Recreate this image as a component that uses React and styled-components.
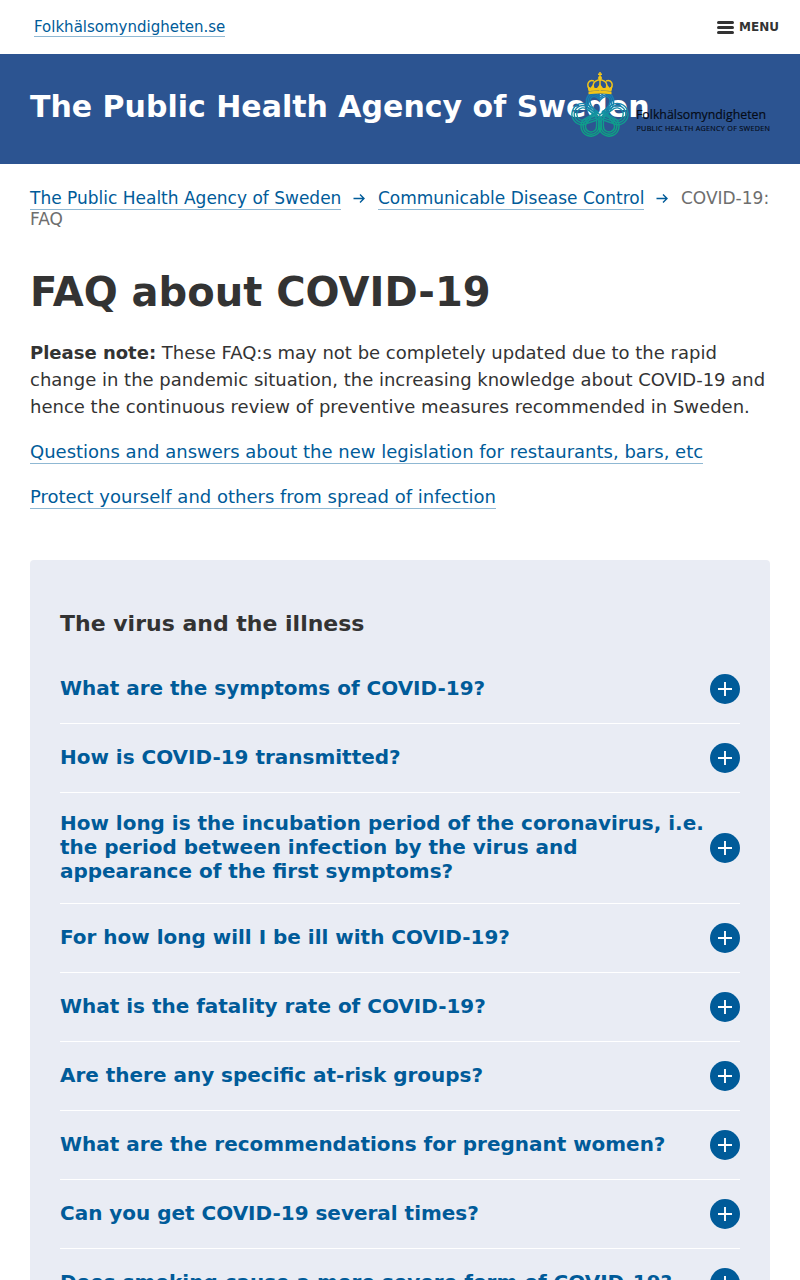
import React from "react";
import styled, { createGlobalStyle } from "styled-components";

const Global = createGlobalStyle`
  *, *::before, *::after { box-sizing: border-box; }
  html, body { margin: 0; height: 100%; overflow: hidden; }
  body {
    background: #fff;
    color: #333;
    font-family: "DejaVu Sans", Verdana, sans-serif;
    font-size: 18px;
    line-height: 27px;
  }
`;

const Page = styled.div`
  height: 1280px;
  overflow: hidden;
`;

const Link = styled.a`
  color: #005b99;
  text-decoration: none;
  padding-bottom: ${(p) => (p.$tight ? "0" : "1px")};
  border-bottom: 1px solid #8fb8d3;
`;

const TopBar = styled.header`
  height: 54px;
  padding: 0 21px 0 34px;
  display: flex;
  align-items: center;
  justify-content: space-between;
  font-size: 15px;
  line-height: 18px;
`;

const MenuButton = styled.button`
  display: flex;
  align-items: center;
  gap: 5px;
  padding: 0;
  border: 0;
  background: none;
  color: #333;
  font: bold 12px/18px "DejaVu Sans", sans-serif;
`;

const Bars = styled.span`
  display: grid;
  gap: 2px;
  width: 17px;
  &::before, &::after, i { content: ""; height: 3px; border-radius: 1.5px; background: #333; }
`;

const Banner = styled.div`
  position: relative;
  height: 110px;
  padding: 0 30px;
  display: flex;
  align-items: center;
  background: #2c5491;
`;

const SiteName = styled.div`
  color: #fff;
  font-size: 30px;
  line-height: 36px;
  font-weight: bold;
  white-space: nowrap;
  padding-bottom: 5px;
`;

const Logo = styled.svg`
  position: absolute;
  top: 16px;
  right: 29px;
  width: 202px;
  height: 70px;
`;

const Main = styled.main`
  padding: 24px 30px 0;
`;

const Breadcrumb = styled.nav`
  font-size: 17px;
  line-height: 21px;
  color: #6e6e6e;
`;

const Arrow = styled.svg`
  width: 12px;
  height: 10px;
  margin: 0 12.5px 0 12px;
`;

const Title = styled.h1`
  margin: 38px 0 23px;
  font-size: 40px;
  line-height: 48px;
`;

const Paragraph = styled.p`
  margin: 0 0 18px;
`;

const Panel = styled.section`
  margin-top: 50px;
  padding: 50px 30px 0;
  min-height: 800px;
  border-radius: 4px;
  background: #e9ecf4;
`;

const PanelTitle = styled.h2`
  margin: 0 0 18px;
  font-size: 22px;
  line-height: 27px;
`;

const Question = styled.div`
  display: flex;
  align-items: center;
  justify-content: space-between;
  padding: 19px 0;
  border-bottom: 1px solid #fff;
`;

const QuestionText = styled.h3`
  margin: -1px 0 1px;
  width: 650px;
  color: #005b99;
  font-size: 19.98px;
  line-height: 24px;
`;

const PlusIcon = styled.svg`
  flex: none;
  width: 30px;
  height: 30px;
`;

const questions = [
  "What are the symptoms of COVID-19?",
  "How is COVID-19 transmitted?",
  "How long is the incubation period of the coronavirus, i.e. the period between infection by the virus and appearance of the first symptoms?",
  "For how long will I be ill with COVID-19?",
  "What is the fatality rate of COVID-19?",
  "Are there any specific at-risk groups?",
  "What are the recommendations for pregnant women?",
  "Can you get COVID-19 several times?",
  "Does smoking cause a more severe form of COVID-19?",
];

const rings = [0, 2.2, 4.4];

function AgencyLogo() {
  return (
    <Logo viewBox="569 70 202 70">
      <defs>
        <linearGradient id="petal" gradientUnits="userSpaceOnUse" x1="0" y1="93" x2="0" y2="128">
          <stop offset="0" stopColor="#1679b5" />
          <stop offset="0.4" stopColor="#1488ad" />
          <stop offset="1" stopColor="#0da383" />
        </linearGradient>
      </defs>
      <g fill="none" stroke="url(#petal)" strokeWidth="1.4">
        {rings.map((d) => (
          <g key={d}>
            <path d={`M600 ${122 - d * 1.6} L${590 + d * 0.7} ${111 - d * 0.7} C${581 + d} ${100 - d * 0.1} ${590 + d * 0.7} ${87 + d} 600 ${96 + d} C${610 - d * 0.7} ${87 + d} ${619 - d} ${100 - d * 0.1} ${610 - d * 0.7} ${111 - d * 0.7} Z`} />
            <path d={`M598 ${112 + d} L${589 - d * 0.3} ${105.5 + d} A${10.7 - d} ${10.7 - d} 0 1 0 ${583 - d * 0.2} ${124.8 - d} L597 ${120 - d}`} />
            <path d={`M602 ${112 + d} L${611 + d * 0.3} ${105.5 + d} A${10.7 - d} ${10.7 - d} 0 1 1 ${617 + d * 0.2} ${124.8 - d} L603 ${120 - d}`} />
            <path d={`M${598 - d * 0.4} 111 L${583.5 + d} ${119.5 + d * 0.5} A${10 - d} ${10 - d} 0 1 0 ${601 - d} 126 L${601 - d} 116`} />
            <path d={`M${602 + d * 0.4} 111 L${616.5 - d} ${119.5 + d * 0.5} A${10 - d} ${10 - d} 0 1 1 ${599 + d} 126 L${599 + d} 116`} />
          </g>
        ))}
      </g>
      <g fill="none" stroke="#f0c419" strokeWidth="1.5">
        <path d="M590.5 91 C584.5 83 590 79.5 594 81 M609.5 91 C615.5 83 610 79.5 606 81 M594.5 90 C591.5 84 594 80.5 600 79.8 C606 80.5 608.5 84 605.5 90 M600 72V91 M598 74.3H602" />
      </g>
      <g fill="#f0c419">
        <path d="M587.5 86 L590.5 87.8 L592.5 85 L594.5 88 L597 88 L600 84 L603 88 L605.5 88 L607.5 85 L609.5 87.8 L612.5 86 L611.5 91 Q600 89.8 588.5 91 Z" />
        <path d="M588.5 91.5 Q600 90.2 611.5 91.5 V94.2 Q600 92.9 588.5 94.2 Z" />
        <circle cx="600" cy="78" r="2" />
      </g>
      <text x="636" y="119" textLength="130" lengthAdjust="spacingAndGlyphs" fontFamily="Open Sans, sans-serif" fontSize="13.5" fill="#050b16" stroke="#050b16" strokeWidth="0.2">Folkhälsomyndigheten</text>
      <text x="636.5" y="131" textLength="133.5" lengthAdjust="spacing" fontFamily="Open Sans, sans-serif" fontSize="7.2" fill="#050b16" stroke="#050b16" strokeWidth="0.15">PUBLIC HEALTH AGENCY OF SWEDEN</text>
    </Logo>
  );
}

function Separator() {
  return (
    <Arrow viewBox="0 0 12 10" fill="none" stroke="#005b99" strokeWidth="1.4">
      <path d="M0.5 4.5H11 M7 0.5L11 4.5L7 8.5" />
    </Arrow>
  );
}

function Plus() {
  return (
    <PlusIcon viewBox="0 0 30 30">
      <circle cx="15" cy="15" r="15" fill="#005b99" />
      <path d="M15 8V22M8 15H22" stroke="#fff" strokeWidth="1.9" />
    </PlusIcon>
  );
}

export default function App() {
  return (
    <Page>
      <Global />
      <TopBar>
        <Link $tight>Folkhälsomyndigheten.se</Link>
        <MenuButton><Bars><i /></Bars>MENU</MenuButton>
      </TopBar>
      <Banner>
        <SiteName>The Public Health Agency of Sweden</SiteName>
        <AgencyLogo />
      </Banner>
      <Main>
        <Breadcrumb>
          <Link>The Public Health Agency of Sweden</Link>
          <Separator />
          <Link>Communicable Disease Control</Link>
          <Separator />
          COVID-19: FAQ
        </Breadcrumb>
        <Title>FAQ about COVID-19</Title>
        <Paragraph>
          <strong>Please note:</strong> These FAQ:s may not be completely updated due to the rapid change in the pandemic situation, the increasing knowledge about COVID-19 and hence the continuous review of preventive measures recommended in Sweden.
        </Paragraph>
        <Paragraph><Link>Questions and answers about the new legislation for restaurants, bars, etc</Link></Paragraph>
        <Paragraph><Link>Protect yourself and others from spread of infection</Link></Paragraph>
        <Panel>
          <PanelTitle>The virus and the illness</PanelTitle>
          {questions.map((q) => (
            <Question key={q}>
              <QuestionText>{q}</QuestionText>
              <Plus />
            </Question>
          ))}
        </Panel>
      </Main>
    </Page>
  );
}
